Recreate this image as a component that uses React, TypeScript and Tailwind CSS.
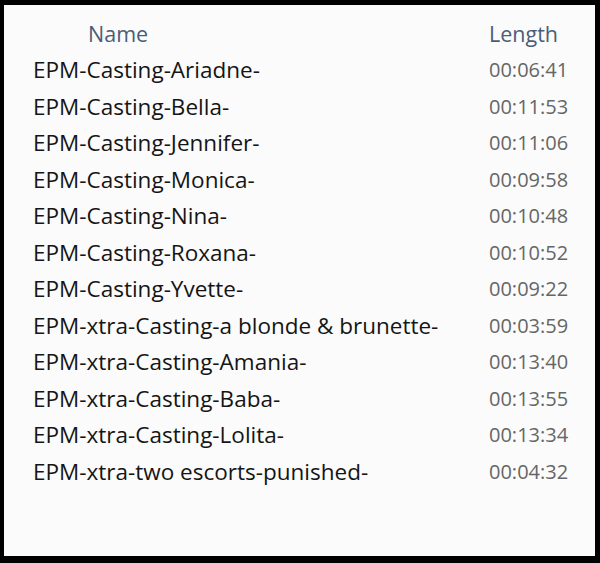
import React from 'react';

const rows: [string, string][] = [
  ['EPM-Casting-Ariadne-', '00:06:41'],
  ['EPM-Casting-Bella-', '00:11:53'],
  ['EPM-Casting-Jennifer-', '00:11:06'],
  ['EPM-Casting-Monica-', '00:09:58'],
  ['EPM-Casting-Nina-', '00:10:48'],
  ['EPM-Casting-Roxana-', '00:10:52'],
  ['EPM-Casting-Yvette-', '00:09:22'],
  ['EPM-xtra-Casting-a blonde & brunette-', '00:03:59'],
  ['EPM-xtra-Casting-Amania-', '00:13:40'],
  ['EPM-xtra-Casting-Baba-', '00:13:55'],
  ['EPM-xtra-Casting-Lolita-', '00:13:34'],
  ['EPM-xtra-two escorts-punished-', '00:04:32'],
];

export default function App() {
  return (
    <div className="w-[600px] h-[563px] bg-black pt-[5px] pl-[4px] pr-[5px] pb-[7px] font-['Open_Sans',sans-serif]">
      <div className="h-full bg-[#fbfbfb] pt-[14px]">
        {/* column headers */}
        <div className="flex h-[30px] items-center text-[21.5px] text-[#4a5d77]">
          <span className="pl-[84px] flex-1">Name</span>
          <span className="w-[106px]">Length</span>
        </div>
        <div className="pt-[3px]">
          {rows.map(([name, len]) => (
            <div key={name} className="flex h-[36.5px] items-center">
              <span className="pl-[29px] flex-1 text-[22.5px] text-[#151515]">{name}</span>
              <span className="w-[106px] text-[20px] text-[#666666]">{len}</span>
            </div>
          ))}
        </div>
      </div>
    </div>
  );
}
